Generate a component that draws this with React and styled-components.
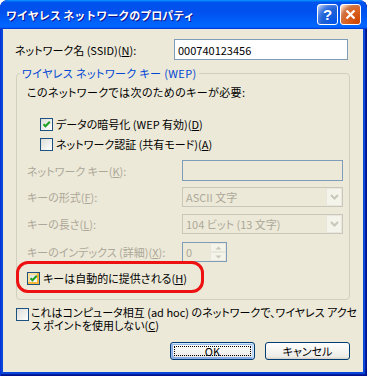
import React from "react";
import styled, { createGlobalStyle, css } from "styled-components";

const GlobalStyle = createGlobalStyle`
  html, body { margin: 0; padding: 0; background: #ffffff; }
  body { font-family: "Noto Sans CJK JP", "Noto Sans", sans-serif; font-size: 11px; }
  * { box-sizing: border-box; }
`;

const Window = styled.div`
  width: 367px;
  height: 376px;
  display: flex;
  flex-direction: column;
  background: #0a47d8;
  border-radius: 8px 8px 0 0;
  overflow: hidden;
  box-shadow: inset 1px 0 #0831d9, inset -1px -1px #00138c, inset -2px -2px #001ea0;
`;

const TitleBar = styled.div`
  height: 29px;
  flex-shrink: 0;
  display: flex;
  align-items: center;
  padding: 0 6px 0 6px;
  background: linear-gradient(180deg, #0997ff, #0053ee 8%, #0050ee 40%, #0066ff 88%, #0066ff 93%, #005bff 95%, #003dd7 96%, #003dd7);
  border-radius: 8px 8px 0 0;
`;

const Title = styled.div`
  flex: 1;
  color: #ffffff;
  font-weight: bold;
  font-size: 11px;
  line-height: 14px;
  padding-top: 1px;
  text-shadow: 1px 1px #0f1089;
  white-space: nowrap;
`;

const CaptionButton = styled.div`
  width: 21px;
  height: 21px;
  margin-left: 2px;
  border: 1px solid #ffffff;
  border-radius: 3px;
  display: flex;
  align-items: center;
  justify-content: center;
  color: #ffffff;
  font-family: "Liberation Sans", sans-serif;
  font-weight: bold;
  font-size: 15px;
  ${(p) =>
    p.$variant === "close"
      ? css`
          background: radial-gradient(circle at 90% 90%, #cc4600 0%, #dc6527 55%, #cd7546 70%, #ffccb2 90%, #ffffff 100%);
        `
      : css`
          background: radial-gradient(circle at 90% 90%, #0054e9 0%, #2263d5 55%, #4479e4 70%, #a3bbec 90%, #ffffff 100%);
        `}
`;

const Body = styled.div`
  flex: 1;
  margin: 0 4px 4px 3px;
  background: #ece9d8;
  padding: 10px 13px 0 12px;
  display: flex;
  flex-direction: column;
  color: #000000;
  font-size: 11px;
  font-feature-settings: "palt";
`;

const SsidRow = styled.div`
  display: flex;
  align-items: center;
  height: 21px;
`;

const Label = styled.span`
  white-space: nowrap;
  line-height: 14px;
  color: ${(p) => (p.$disabled ? "#aca899" : "#000000")};
`;

const TextBox = styled.div`
  height: ${(p) => p.$h || 21}px;
  width: ${(p) => p.$w}px;
  border: 1px solid #7f9db9;
  background: ${(p) => (p.$disabled ? "#ece9d8" : "#ffffff")};
  color: ${(p) => (p.$disabled ? "#aca899" : "#000000")};
  padding: 0 3px;
  display: flex;
  align-items: center;
  margin-left: ${(p) => (p.$push ? "auto" : "0")};
  margin-right: ${(p) => p.$mr || 0}px;
  font-feature-settings: normal;
`;

const GroupBox = styled.fieldset`
  margin: 6px 0 0 1px;
  padding: 0;
  border: 1px solid #d0d0bf;
  border-radius: 4px;
  min-width: 0;
`;

const Legend = styled.legend`
  color: #0046d5;
  padding: 0 2px;
  margin-left: 3px;
  line-height: 14px;
  letter-spacing: 0.4px;
`;

const GroupContent = styled.div`
  padding: 5px 6px 11px 10px;
  display: flex;
  flex-direction: column;
`;

const Intro = styled.div`
  line-height: 14px;
  height: 14px;
  letter-spacing: 0.4px;
`;

const CheckRow = styled.div`
  position: relative;
  display: flex;
  align-items: center;
  height: 20px;
  gap: 3px;
  padding-left: ${(p) => p.$indent || 0}px;
  margin-top: ${(p) => p.$mt || 0}px;
`;

const Box = styled.span`
  width: 13px;
  height: 13px;
  flex-shrink: 0;
  border: 1px solid #1c5180;
  background: linear-gradient(135deg, #dcdcd7, #ffffff);
  display: flex;
  align-items: center;
  justify-content: center;
  ${(p) =>
    p.$hover &&
    css`
      box-shadow: inset -2px -2px #f8b636, inset 2px 2px #fedf9c;
    `}
`;

const Highlight = styled.div`
  position: absolute;
  left: -11px;
  top: -7px;
  width: 188px;
  height: 32px;
  border: 3px solid #ee1111;
  border-radius: 12px;
  pointer-events: none;
`;

const FieldRow = styled.div`
  display: grid;
  grid-template-columns: 155px 1fr;
  align-items: center;
  margin-top: ${(p) => p.$mt || 0}px;
`;

const Combo = styled.div`
  height: 20px;
  border: 1px solid #c9c7ba;
  background: #ece9d8;
  color: #aca899;
  display: flex;
  align-items: center;
  padding-left: 3px;
`;

const ComboText = styled.span`
  flex: 1;
  white-space: nowrap;
`;

const DropButton = styled.span`
  width: 16px;
  height: 18px;
  background: #f5f4ea;
  border: 1px solid #e9e7dd;
  display: flex;
  align-items: center;
  justify-content: center;
`;

const Spin = styled.div`
  width: 45px;
  height: 20px;
  border: 1px solid #7f9db9;
  background: #ece9d8;
  color: #aca899;
  display: flex;
  align-items: center;
  padding-left: 3px;
`;

const SpinButtons = styled.span`
  margin-left: auto;
  width: 16px;
  height: 18px;
  display: flex;
  flex-direction: column;
`;

const SpinHalf = styled.span`
  flex: 1;
  background: #f5f4ea;
  border: 1px solid #e9e7dd;
  display: flex;
  align-items: center;
  justify-content: center;
`;

const AdhocRow = styled.div`
  display: flex;
  align-items: flex-start;
  margin-top: 6px;
`;

const AdhocBox = styled(Box)`
  margin: 2px 0 0 1px;
`;

const AdhocText = styled.div`
  margin-left: 2px;
  display: flex;
  flex-direction: column;
`;

const AdhocLine = styled.span`
  display: block;
  line-height: 13px;
  height: 13px;
  white-space: nowrap;
`;

const ButtonRow = styled.div`
  display: flex;
  justify-content: flex-end;
  gap: 10px;
  margin-top: 10px;
`;

const Button = styled.div`
  width: 85px;
  height: 18px;
  border: 1px solid #003c74;
  border-radius: 3px;
  background: linear-gradient(180deg, #ffffff, #ecebe6 86%, #d6d0c5);
  display: flex;
  align-items: center;
  justify-content: center;
  position: relative;
  line-height: 14px;
  ${(p) =>
    p.$default &&
    css`
      box-shadow: inset -1px 1px #cee7ff, inset 1px 2px #98b8ea, inset -2px 2px #bcd4f6, inset 1px -1px #89ade4, inset 2px -2px #89ade4;
      &::after {
        content: "";
        position: absolute;
        inset: 3px;
        border: 1px dotted #000000;
      }
    `}
`;

const Check = () => (
  <svg width="9" height="9" viewBox="0 0 9 9">
    <path d="M1.5 4.2 L3.5 6.3 L7.8 1.8" fill="none" stroke="#21a121" strokeWidth="2" />
  </svg>
);

const Chevron = () => (
  <svg width="9" height="6" viewBox="0 0 9 6">
    <path d="M1 1 L4.5 4.5 L8 1" fill="none" stroke="#c9c7ba" strokeWidth="2" />
  </svg>
);

const Arrow = ({ up }) => (
  <svg width="7" height="4" viewBox="0 0 7 4">
    <path d={up ? "M0.5 3.5 L3.5 0.5 L6.5 3.5 Z" : "M0.5 0.5 L3.5 3.5 L6.5 0.5 Z"} fill="#c9c7ba" />
  </svg>
);

export default function App() {
  return (
    <>
      <GlobalStyle />
      <Window>
        <TitleBar>
          <Title>ワイヤレス ネットワークのプロパティ</Title>
          <CaptionButton $variant="help">?</CaptionButton>
          <CaptionButton $variant="close">
            <svg width="11" height="11" viewBox="0 0 11 11">
              <path d="M1.5 1.5 L9.5 9.5 M9.5 1.5 L1.5 9.5" stroke="#ffffff" strokeWidth="2.2" />
            </svg>
          </CaptionButton>
        </TitleBar>
        <Body>
          <SsidRow>
            <Label>
              ネットワーク名 (SSID)(<u>N</u>):
            </Label>
            <TextBox $w={174} $push $mr={2}>
              000740123456
            </TextBox>
          </SsidRow>

          <GroupBox>
            <Legend>ワイヤレス ネットワーク キー (WEP)</Legend>
            <GroupContent>
              <Intro>このネットワークでは次のためのキーが必要:</Intro>
              <CheckRow $indent={13} $mt={15}>
                <Box>
                  <Check />
                </Box>
                <Label>
                  データの暗号化 (WEP 有効)(<u>D</u>)
                </Label>
              </CheckRow>
              <CheckRow $indent={13}>
                <Box />
                <Label>
                  ネットワーク認証 (共有モード)(<u>A</u>)
                </Label>
              </CheckRow>

              <FieldRow $mt={6}>
                <Label $disabled>
                  ネットワーク キー(<u>K</u>):
                </Label>
                <TextBox $disabled />
              </FieldRow>
              <FieldRow $mt={6}>
                <Label $disabled>
                  キーの形式(<u>F</u>):
                </Label>
                <Combo>
                  <ComboText>ASCII 文字</ComboText>
                  <DropButton>
                    <Chevron />
                  </DropButton>
                </Combo>
              </FieldRow>
              <FieldRow $mt={7}>
                <Label $disabled>
                  キーの長さ(<u>L</u>):
                </Label>
                <Combo>
                  <ComboText>104 ビット (13 文字)</ComboText>
                  <DropButton>
                    <Chevron />
                  </DropButton>
                </Combo>
              </FieldRow>
              <FieldRow $mt={8}>
                <Label $disabled>
                  キーのインデックス (詳細)(<u>X</u>):
                </Label>
                <Spin>
                  <span>0</span>
                  <SpinButtons>
                    <SpinHalf>
                      <Arrow up />
                    </SpinHalf>
                    <SpinHalf>
                      <Arrow />
                    </SpinHalf>
                  </SpinButtons>
                </Spin>
              </FieldRow>

              <CheckRow $mt={6}>
                <Box $hover>
                  <Check />
                </Box>
                <Label>
                  キーは自動的に提供される(<u>H</u>)
                </Label>
                <Highlight />
              </CheckRow>
            </GroupContent>
          </GroupBox>

          <AdhocRow>
            <AdhocBox />
            <AdhocText>
              <AdhocLine>これはコンピュータ相互 (ad hoc) のネットワークで、ワイヤレス アクセ</AdhocLine>
              <AdhocLine>
                ス ポイントを使用しない(<u>C</u>)
              </AdhocLine>
            </AdhocText>
          </AdhocRow>

          <ButtonRow>
            <Button $default>OK</Button>
            <Button>キャンセル</Button>
          </ButtonRow>
        </Body>
      </Window>
    </>
  );
}
